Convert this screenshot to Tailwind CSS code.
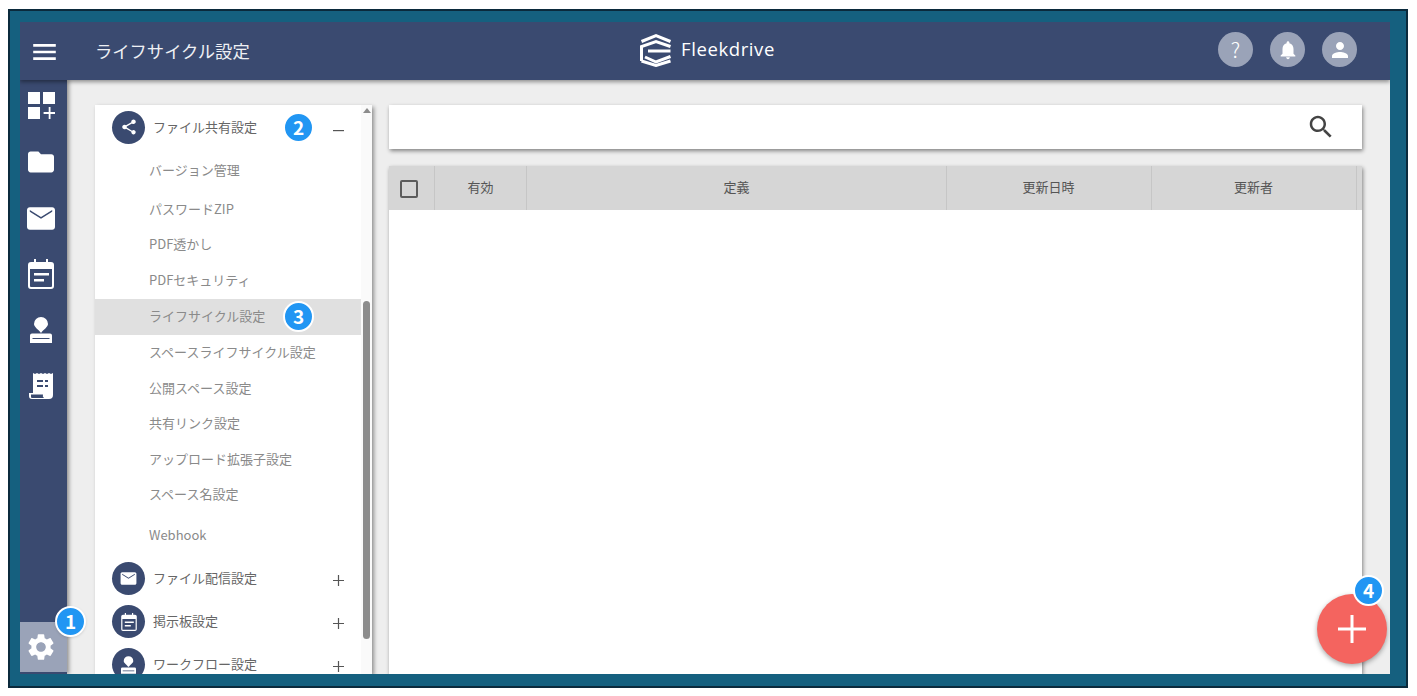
<!DOCTYPE html>
<html lang="ja">
<head>
  <meta charset="UTF-8" />
  <script src="https://cdn.jsdelivr.net/npm/@tailwindcss/browser@4"></script>
  <title>ライフサイクル設定</title>
</head>
<body class="bg-white overflow-hidden font-['Noto_Sans_CJK_JP',sans-serif]">
  <!-- Outer frame -->
  <div class="ml-[8px] mt-[9px] w-[1400px] h-[679px] border-2 border-[#0b2a3c] bg-[#15607f] pl-[10px] pt-[11px] pr-[16px] pb-[12px]">
    <div class="relative flex flex-col h-[652px] w-[1370px] overflow-hidden bg-[#eeeeee]">

      <!-- Header -->
      <header class="relative z-20 flex items-center h-[58px] shrink-0 bg-[#3a4a70] shadow-[0_2px_4px_rgba(0,0,0,0.4)]">
        <div class="w-[47px] flex justify-center pl-[1px] pt-[2px]">
          <svg class="w-[23px] h-[16px]" viewBox="0 0 24 17" fill="#fff"><path d="M0 0h24v2.800H0zM0 7.100h24v2.800H0zM0 14.200h24V17H0z"/></svg>
        </div>
        <h1 class="ml-[28px] w-[500px] text-[17.300px] text-[#eef0f4]">ライフサイクル設定</h1>
        <div class="flex items-center ml-[45px] mb-[3px]">
          <svg class="w-[32px] h-[34px]" viewBox="0 0 32 34" fill="none" stroke="#fff" stroke-width="3">
            <path d="M1.500 8.500 16 2.500l14.500 6" />
            <path d="M1.500 28V13.500L16 8.500l14.500 5" />
            <path d="M8 18h22.500" />
            <path d="M5 24l11 5 14.500-5.500" />
            <path d="M1.500 28 16 32.500 30.500 28" />
          </svg>
          <span class="ml-[9px] text-[18.500px] leading-none tracking-[0.6px] text-white font-['Open_Sans',sans-serif]">Fleekdrive</span>
        </div>
        <div class="ml-auto mr-[33px] mb-[3px] flex gap-[17px]">
          <div class="w-[35px] h-[35px] rounded-full bg-[#9aa3b8] flex items-center justify-center text-[21px] font-light text-white">?</div>
          <div class="w-[35px] h-[35px] rounded-full bg-[#9aa3b8] flex items-center justify-center">
            <svg class="w-[22px] h-[22px]" viewBox="0 0 24 24" fill="#fff"><path d="M12 22c1.100 0 2-.9 2-2h-4c0 1.100.9 2 2 2zm6-6v-5c0-3.070-1.630-5.640-4.500-6.320V4c0-.83-.67-1.500-1.500-1.500s-1.500.67-1.500 1.500v.68C7.640 5.360 6 7.920 6 11v5l-2 2v1h16v-1l-2-2z"/></svg>
          </div>
          <div class="w-[35px] h-[35px] rounded-full bg-[#9aa3b8] flex items-center justify-center">
            <svg class="w-[24px] h-[24px]" viewBox="0 0 24 24" fill="#fff"><path d="M12 12c2.210 0 4-1.790 4-4s-1.790-4-4-4-4 1.790-4 4 1.790 4 4 4zm0 2c-2.670 0-8 1.340-8 4v2h16v-2c0-2.660-5.330-4-8-4z"/></svg>
          </div>
        </div>
      </header>

      <div class="flex flex-1 min-h-0">
        <!-- Sidebar -->
        <aside class="relative z-10 w-[47px] shrink-0 flex flex-col items-center bg-[#3a4a70] shadow-[2px_0_4px_rgba(0,0,0,0.4)]">
          <div class="h-[50px] mb-[4px] w-full flex items-center justify-center pr-[5px]">
            <svg class="w-[27px] h-[27px]" viewBox="3 3 18 18" fill="#fff"><path d="M3 3h8v8H3zm10 0h8v8h-8zM3 13h8v8H3zm15 0h-1.200v3.400h-3.400v1.200h3.400V21h1.200v-3.400h3.400v-1.200H18z"/></svg>
          </div>
          <div class="h-[56px] w-full flex items-center justify-center pr-[5px]">
            <svg class="w-[26px] h-[22px]" viewBox="2 4 20 16" fill="#fff"><path d="M10 4H4c-1.100 0-2 .9-2 2v12c0 1.100.9 2 2 2h16c1.100 0 2-.9 2-2V8c0-1.100-.9-2-2-2h-8l-2-2z"/></svg>
          </div>
          <div class="h-[56px] w-full flex items-center justify-center pr-[5px]">
            <svg class="w-[28px] h-[23px]" viewBox="2 4 20 16" fill="#fff"><path d="M20 4H4c-1.100 0-2 .9-2 2v12c0 1.100.9 2 2 2h16c1.100 0 2-.9 2-2V6c0-1.100-.9-2-2-2zm0 3.200-8 5-8-5V6l8 5 8-5v1.200z"/></svg>
          </div>
          <div class="h-[56px] w-full flex items-center justify-center pr-[5px]">
            <svg class="w-[26px] h-[30px]" viewBox="0 0 26 30" fill="#fff" fill-rule="evenodd"><path d="M6 0h2v3h10V0h2v3h3a3 3 0 0 1 3 3v21a3 3 0 0 1-3 3H3a3 3 0 0 1-3-3V6a3 3 0 0 1 3-3h3zM2 10v17a1 1 0 0 0 1 1h20a1 1 0 0 0 1-1V10zM6 14h15v2.500H6zM6 20h10v2.500H6z"/></svg>
          </div>
          <div class="h-[56px] w-full flex items-center justify-center pr-[5px]">
            <svg class="w-[22px] h-[26px]" viewBox="0 0 22 26" fill="#fff" fill-rule="evenodd"><path d="M11 0a7 7 0 0 1 7 7c0 3-4 5-7 9c-3-4-7-6-7-9a7 7 0 0 1 7-7zM2 16.500h18a2 2 0 0 1 2 2V26H0v-7.500a2 2 0 0 1 2-2zM2.500 21v1h17v-1z"/></svg>
          </div>
          <div class="h-[56px] w-full flex items-center justify-center pr-[5px]">
            <svg class="w-[24px] h-[27px]" viewBox="0 0 24 27" fill="#fff" fill-rule="evenodd"><path d="M4 0l2 1 2-1 2 1 2-1 2 1 2-1 2 1 2-1 2 1 2-1v22a4 4 0 0 1-4 4H3a3 3 0 0 1-3-3v-3h4zM8 7v2h6V7zM16 7v2h3V7zM8 12v2h6v-2zM16 12v2h3v-2zM2 21.500V24a1 1 0 0 0 1 1h12a3 3 0 0 1-1-3.500z"/></svg>
          </div>
          <!-- Settings -->
          <div class="relative mt-auto mb-[2px] h-[50px] w-full bg-[#9aa3b8] flex items-center justify-center pr-[5px]">
            <svg class="w-[32px] h-[32px]" viewBox="0 0 24 24" fill="#fff"><path d="M19.140 12.940c.04-.3.06-.61.06-.94 0-.32-.02-.64-.07-.94l2.030-1.580c.18-.14.23-.41.12-.61l-1.920-3.320c-.12-.22-.37-.29-.59-.22l-2.390.96c-.5-.38-1.030-.7-1.620-.94l-.36-2.540c-.04-.24-.24-.41-.48-.41h-3.840c-.24 0-.43.17-.47.41l-.36 2.540c-.59.24-1.130.57-1.620.94l-2.390-.96c-.22-.08-.47 0-.59.22L2.740 8.870c-.12.21-.08.47.12.61l2.030 1.580c-.05.3-.09.63-.09.94s.02.64.07.94l-2.030 1.580c-.18.14-.23.41-.12.61l1.920 3.320c.12.22.37.29.59.22l2.390-.96c.5.38 1.030.7 1.620.94l.36 2.540c.05.24.24.41.48.41h3.840c.24 0 .44-.17.47-.41l.36-2.540c.59-.24 1.130-.56 1.620-.94l2.390.96c.22.08.47 0 .59-.22l1.920-3.320c.12-.22.07-.47-.12-.61l-2.010-1.580zM12 15.600c-1.980 0-3.600-1.620-3.600-3.600s1.620-3.600 3.600-3.600 3.600 1.620 3.600 3.600-1.620 3.600-3.600 3.600z"/></svg>
            <span class="absolute left-[35px] top-[-16px] w-[31px] h-[31px] rounded-full border-2 border-white bg-[#2196f3] flex items-center justify-center text-[19px] font-bold text-white shadow">1</span>
          </div>
        </aside>

        <!-- Main -->
        <main class="flex flex-1 min-w-0 pl-[28px] pt-[25px] gap-[17px]">
          <!-- Settings nav -->
          <section class="flex w-[277px] shrink-0 h-[569px] bg-white overflow-hidden shadow-[2px_2px_4px_rgba(0,0,0,0.4)] text-[13px] text-[#8a8a8a]">
            <nav class="w-[266px] shrink-0">
              <div class="relative flex items-center h-[44px] pl-[17px] text-[#666]">
                <span class="w-[33px] h-[33px] rounded-full bg-[#3a4a70] flex items-center justify-center">
                  <svg class="w-[18px] h-[18px]" viewBox="0 0 24 24" fill="#fff"><path d="M18 16.080c-.76 0-1.440.3-1.960.77L8.910 12.700c.05-.23.09-.46.09-.7s-.04-.47-.09-.7l7.050-4.110c.54.5 1.250.81 2.040.81 1.660 0 3-1.340 3-3s-1.340-3-3-3-3 1.340-3 3c0 .24.04.47.09.7L8.040 9.810C7.500 9.310 6.790 9 6 9c-1.660 0-3 1.340-3 3s1.340 3 3 3c.79 0 1.500-.31 2.040-.81l7.120 4.160c-.05.21-.08.43-.08.65 0 1.610 1.310 2.920 2.920 2.920s2.920-1.310 2.920-2.920-1.310-2.920-2.920-2.920z"/></svg>
                </span>
                <span class="ml-[8px]">ファイル共有設定</span>
                <span class="absolute left-[188px] top-[7px] w-[31px] h-[31px] rounded-full border-2 border-white bg-[#2196f3] flex items-center justify-center text-[19px] font-bold text-white">2</span>
                <svg class="absolute left-[238px] top-[25px] w-[11px] h-[2px]" viewBox="0 0 11 2" fill="#555"><path d="M0 0h11v1.200H0z"/></svg>
              </div>
              <div class="flex items-center h-[42px] pl-[54px]">バージョン管理</div>
              <div class="flex items-center h-[36px] pl-[54px]">パスワードZIP</div>
              <div class="flex items-center h-[34px] pl-[54px]">PDF透かし</div>
              <div class="flex items-center h-[38px] pb-[1px] pl-[54px]">PDFセキュリティ</div>
              <div class="relative flex items-center h-[36px] pb-[2px] pl-[54px] bg-[#e0e0e0]">ライフサイクル設定
                <span class="absolute left-[188px] top-[2px] w-[31px] h-[31px] rounded-full border-2 border-white bg-[#2196f3] flex items-center justify-center text-[19px] font-bold text-white">3</span>
              </div>
              <div class="flex items-center h-[35px] pb-[2px] pl-[54px]">スペースライフサイクル設定</div>
              <div class="flex items-center h-[36px] pl-[54px]">公開スペース設定</div>
              <div class="flex items-center h-[36px] pb-[2px] pl-[54px]">共有リンク設定</div>
              <div class="flex items-center h-[36px] pb-[2px] pl-[54px]">アップロード拡張子設定</div>
              <div class="flex items-center h-[35px] pb-[3px] pl-[54px]">スペース名設定</div>
              <div class="flex items-center h-[44px] pl-[54px]">Webhook</div>
              <div class="relative flex items-center h-[43px] pl-[17px] text-[#666]">
                <span class="w-[33px] h-[33px] rounded-full bg-[#3a4a70] flex items-center justify-center">
                  <svg class="w-[19px] h-[19px]" viewBox="0 0 24 24" fill="#fff"><path d="M20 4H4c-1.100 0-2 .9-2 2v12c0 1.100.9 2 2 2h16c1.100 0 2-.9 2-2V6c0-1.100-.9-2-2-2zm0 3.200-8 5-8-5V6l8 5 8-5v1.200z"/></svg>
                </span>
                <span class="ml-[8px] pb-[2px]">ファイル配信設定</span>
                <svg class="absolute left-[238px] top-[18px] w-[11px] h-[11px]" viewBox="0 0 11 11" fill="#555"><path d="M0 4.900h11v1.200H0zM4.900 0h1.200v11H4.900z"/></svg>
              </div>
              <div class="relative flex items-center h-[43px] pl-[17px] text-[#666]">
                <span class="w-[33px] h-[33px] rounded-full bg-[#3a4a70] flex items-center justify-center">
                  <svg class="w-[16px] h-[18px]" viewBox="0 0 26 30" fill="#fff" fill-rule="evenodd"><path d="M6 0h2v3h10V0h2v3h3a3 3 0 0 1 3 3v21a3 3 0 0 1-3 3H3a3 3 0 0 1-3-3V6a3 3 0 0 1 3-3h3zM2 10v17a1 1 0 0 0 1 1h20a1 1 0 0 0 1-1V10zM6 14h15v2.500H6zM6 20h10v2.500H6z"/></svg>
                </span>
                <span class="ml-[8px] pb-[2px]">掲示板設定</span>
                <svg class="absolute left-[238px] top-[18px] w-[11px] h-[11px]" viewBox="0 0 11 11" fill="#555"><path d="M0 4.900h11v1.200H0zM4.900 0h1.200v11H4.900z"/></svg>
              </div>
              <div class="relative flex items-center h-[43px] pl-[17px] text-[#666]">
                <span class="w-[33px] h-[33px] rounded-full bg-[#3a4a70] flex items-center justify-center">
                  <svg class="w-[15px] h-[18px]" viewBox="0 0 22 26" fill="#fff" fill-rule="evenodd"><path d="M11 0a7 7 0 0 1 7 7c0 3-4 5-7 9c-3-4-7-6-7-9a7 7 0 0 1 7-7zM2 16.500h18a2 2 0 0 1 2 2V26H0v-7.500a2 2 0 0 1 2-2zM2.500 21v1h17v-1z"/></svg>
                </span>
                <span class="ml-[8px] pb-[2px]">ワークフロー設定</span>
                <svg class="absolute left-[238px] top-[18px] w-[11px] h-[11px]" viewBox="0 0 11 11" fill="#555"><path d="M0 4.900h11v1.200H0zM4.900 0h1.200v11H4.900z"/></svg>
              </div>
            </nav>
            <!-- Scrollbar -->
            <div class="w-[11px] shrink-0 bg-[#fafafa] flex flex-col items-center">
              <div class="mt-[3px] w-0 h-0 border-x-[4px] border-x-transparent border-b-[5px] border-b-[#8c8c8c]"></div>
              <div class="mt-[188px] w-[7px] h-[338px] rounded-full bg-[#8c8c8c]"></div>
            </div>
          </section>

          <!-- Right column -->
          <div class="flex flex-col w-[973px] shrink-0 gap-[17px]">
            <div class="flex items-center justify-end h-[44px] shrink-0 pr-[26px] bg-white shadow-[1px_2px_4px_rgba(0,0,0,0.45)]">
              <svg class="w-[30px] h-[30px]" viewBox="0 0 24 24" fill="#444"><path d="M15.500 14h-.79l-.28-.27C15.410 12.590 16 11.110 16 9.500 16 5.910 13.090 3 9.500 3S3 5.910 3 9.500 5.910 16 9.500 16c1.610 0 3.090-.59 4.230-1.570l.27.28v.79l5 4.990L20.490 19l-4.990-5zm-6 0C7.010 14 5 11.990 5 9.500S7.010 5 9.500 5 14 7.010 14 9.500 11.990 14 9.500 14z"/></svg>
            </div>
            <div class="flex-1 bg-white shadow-[1px_2px_4px_rgba(0,0,0,0.45)]">
              <div class="flex h-[44px] bg-[#d6d6d6] text-[13px] text-[#555]">
                <div class="w-[46px] flex items-center justify-center pr-[6px] pt-[2px] border-r border-[#c6c6c6]">
                  <span class="w-[18px] h-[18px] rounded-[2px] border-2 border-[#5c5c5c]"></span>
                </div>
                <div class="w-[92px] flex items-center justify-center pb-[3px] border-r border-[#c6c6c6]">有効</div>
                <div class="w-[420px] flex items-center justify-center pb-[3px] border-r border-[#c6c6c6]">定義</div>
                <div class="w-[205px] flex items-center justify-center pb-[3px] pr-[1px] border-r border-[#c6c6c6]">更新日時</div>
                <div class="w-[205px] flex items-center justify-center pb-[3px] pr-[1px] border-r border-[#c6c6c6]">更新者</div>
              </div>
            </div>
          </div>
        </main>
      </div>

      <!-- Add button -->
      <button class="absolute z-30 left-[1297px] top-[572px] w-[70px] h-[70px] rounded-full bg-[#f4645f] flex items-center justify-center shadow-[0_2px_5px_rgba(0,0,0,0.35)]">
        <svg class="w-[28px] h-[28px]" viewBox="0 0 28 28" fill="#fff"><path d="M0 12.500h28v3H0zM12.500 0h3v28h-3z"/></svg>
      </button>
      <span class="absolute z-40 left-[1333px] top-[553px] w-[31px] h-[31px] rounded-full border-2 border-white bg-[#2196f3] flex items-center justify-center text-[19px] font-bold text-white">4</span>
    </div>
  </div>
</body>
</html>
